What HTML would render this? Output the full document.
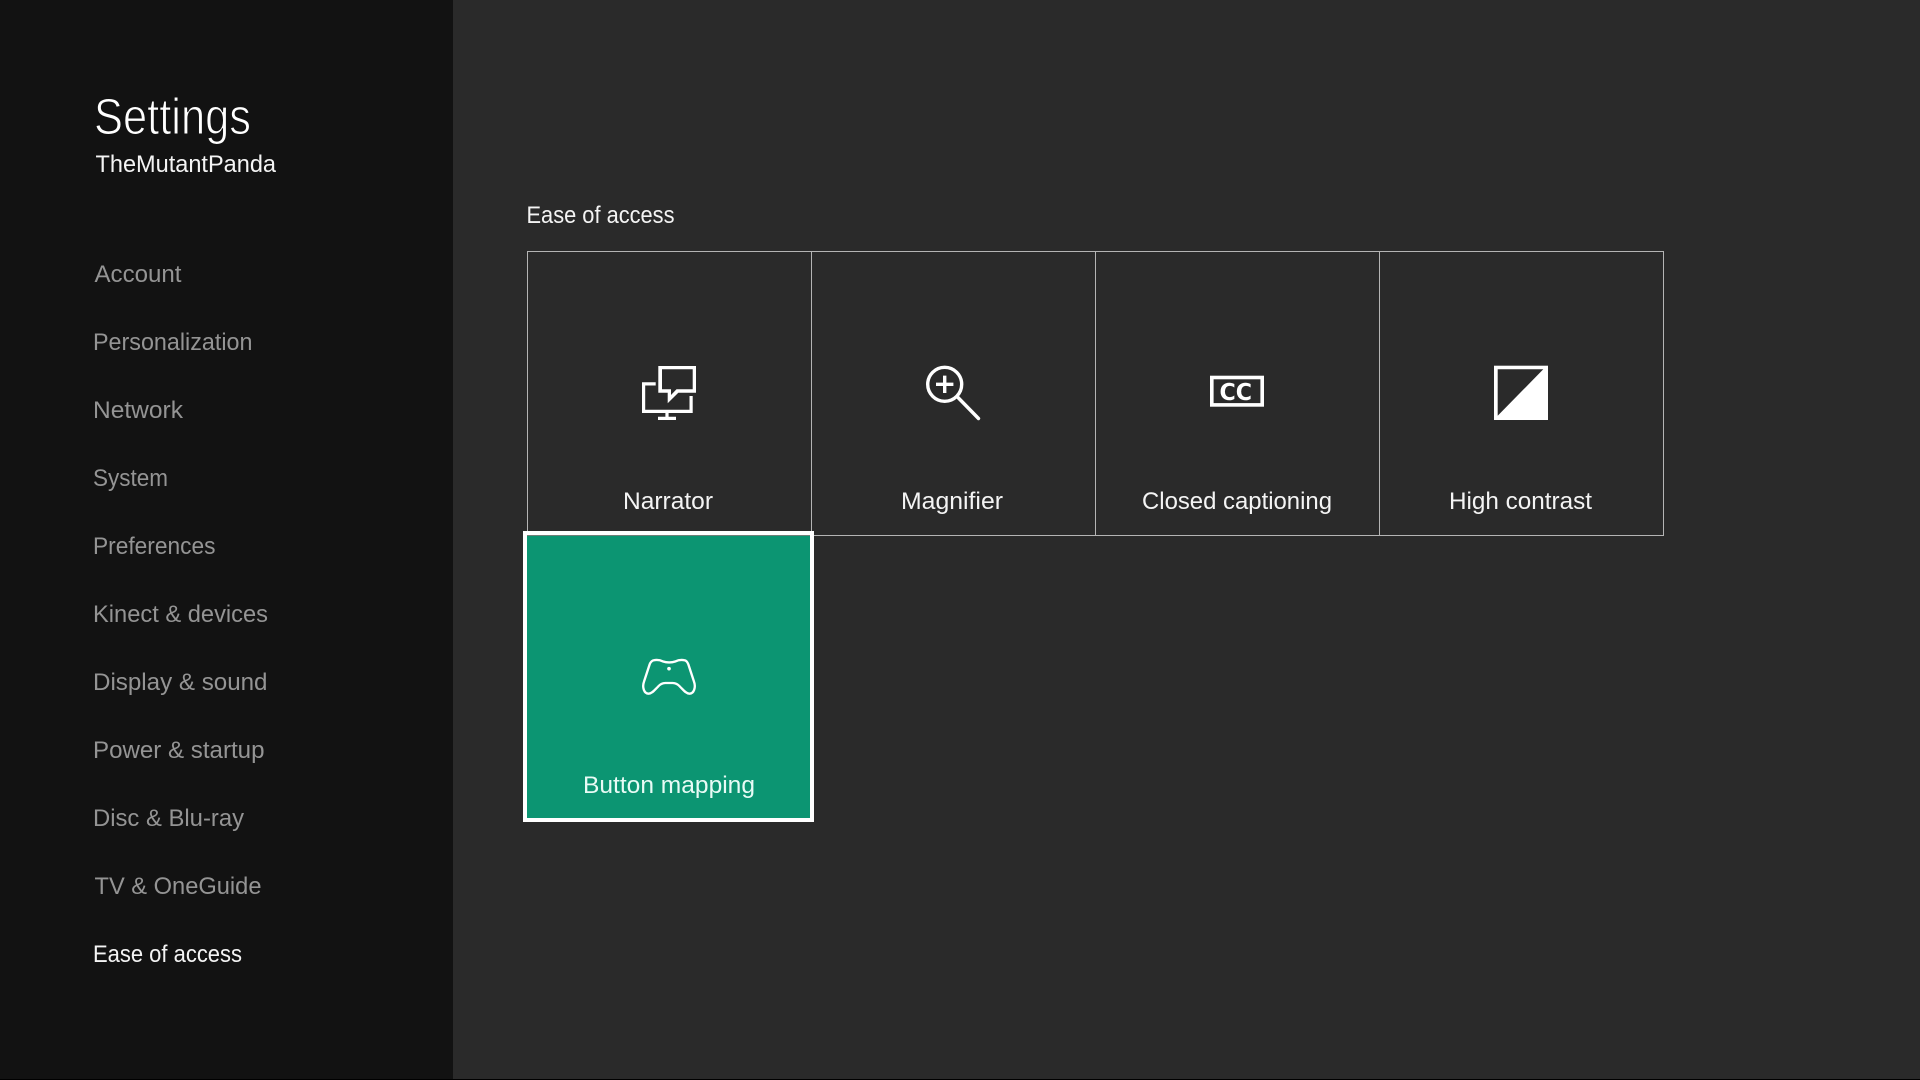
<!DOCTYPE html>
<html lang="en"><head><meta charset="utf-8"><title>Settings</title>
<style>
html,body{margin:0;padding:0;width:1920px;height:1080px;overflow:hidden;background:#2a2a2a}
svg{display:block;position:absolute;left:0;top:0}
text{font-family:"Liberation Sans",sans-serif;font-size:24px}
.n{fill:#949494}
.w{fill:#f4f4f4}
</style></head><body>
<svg width="1920" height="1080" viewBox="0 0 1920 1080" xmlns="http://www.w3.org/2000/svg">
<rect width="1920" height="1080" fill="#2a2a2a"/>
<rect width="453" height="1080" fill="#121212"/>
<rect y="1079" width="1920" height="1" fill="#000"/>

<text x="94" y="134" style="font-size:51px" fill="#fff" stroke="#121212" stroke-width="1.1" textLength="157" lengthAdjust="spacingAndGlyphs">Settings</text>
<text x="95.5" y="172" class="w" textLength="180.5" lengthAdjust="spacingAndGlyphs">TheMutantPanda</text>

<text x="94.5" y="282" class="n" textLength="87" lengthAdjust="spacingAndGlyphs">Account</text>
<text x="93" y="350" class="n" textLength="159.5" lengthAdjust="spacingAndGlyphs">Personalization</text>
<text x="93" y="418" class="n" textLength="90" lengthAdjust="spacingAndGlyphs">Network</text>
<text x="93" y="486" class="n" textLength="75" lengthAdjust="spacingAndGlyphs">System</text>
<text x="93" y="554" class="n" textLength="122.5" lengthAdjust="spacingAndGlyphs">Preferences</text>
<text x="93" y="622" class="n" textLength="175" lengthAdjust="spacingAndGlyphs">Kinect &amp; devices</text>
<text x="93" y="690" class="n" textLength="174.5" lengthAdjust="spacingAndGlyphs">Display &amp; sound</text>
<text x="93" y="758" class="n" textLength="171.5" lengthAdjust="spacingAndGlyphs">Power &amp; startup</text>
<text x="93" y="826" class="n" textLength="151" lengthAdjust="spacingAndGlyphs">Disc &amp; Blu-ray</text>
<text x="94.5" y="894" class="n" textLength="167" lengthAdjust="spacingAndGlyphs">TV &amp; OneGuide</text>
<text x="93" y="962" class="w" textLength="149" lengthAdjust="spacingAndGlyphs">Ease of access</text>

<text x="526.5" y="223" class="w" textLength="148" lengthAdjust="spacingAndGlyphs">Ease of access</text>

<g fill="none" stroke="#b4b4b4" stroke-width="1">
<rect x="527.5" y="251.5" width="284" height="284"/>
<rect x="811.5" y="251.5" width="284" height="284"/>
<rect x="1095.5" y="251.5" width="284" height="284"/>
<rect x="1379.5" y="251.5" width="284" height="284"/>
</g>

<!-- Narrator -->
<path fill="#fff" fill-rule="evenodd" d="M658.3 366H696V392.7H678.3L667.7 403.3V392.7H658.3ZM662 369.3V389.3H671V395L676.5 389.3H692.7V369.3Z"/>
<g fill="none" stroke="#fff" stroke-width="3.2">
<path d="M655.7 383.9H643.6V411.4H691.1V396"/>
<path d="M667 412V418.3M658 418.4H676"/>
</g>
<text x="623" y="509" class="w" textLength="90" lengthAdjust="spacingAndGlyphs">Narrator</text>

<!-- Magnifier -->
<g fill="none" stroke="#fff" stroke-width="3.4">
<circle cx="944.7" cy="384.3" r="17"/>
<path d="M936 384.3H953.4M944.7 375.6V393"/>
<path d="M957.5 397L978.5 418.5" stroke-linecap="round"/>
</g>
<text x="901" y="509" class="w" textLength="102" lengthAdjust="spacingAndGlyphs">Magnifier</text>

<!-- Closed captioning -->
<rect x="1211.8" y="377.5" width="50.4" height="27.4" fill="none" stroke="#fff" stroke-width="3.6"/>
<text x="1219.5" y="400" style="font-family:'DejaVu Sans',sans-serif;font-size:23px;font-weight:bold" fill="#fff" textLength="32.5" lengthAdjust="spacingAndGlyphs">CC</text>
<text x="1142" y="509" class="w" textLength="190" lengthAdjust="spacingAndGlyphs">Closed captioning</text>

<!-- High contrast -->
<rect x="1494" y="365.7" width="54" height="54.3" fill="#fff"/>
<path d="M1497.7 369.3H1543.3L1497.7 415.7Z" fill="#2a2a2a"/>
<text x="1449" y="509" class="w" textLength="143" lengthAdjust="spacingAndGlyphs">High contrast</text>

<!-- Selected tile -->
<rect x="523" y="531" width="291" height="291" fill="#fff"/>
<rect x="527" y="535" width="283" height="283" fill="#0c9572"/>
<rect x="527" y="535" width="283" height="1" fill="#6f7f78"/>
<g transform="translate(620 630) scale(.33333)">
<path d="M100 91C110 89 120 90 128 94C140 98 155 98 167 94C175 90 185 89 195 91C200 93 203 98 205 103L222 155C228 172 222 191 208 191C198 191 190 180 180 170C174 163 168 159 158 159L136 159C126 159 120 163 114 170C104 180 96 191 86 191C72 191 66 172 72 155L89 103C91 98 95 93 100 91Z" fill="none" stroke="#fff" stroke-width="7"/>
<circle cx="147" cy="116" r="5.5" fill="#fff"/>
</g>
<text x="583" y="793" fill="#e8fbf5" textLength="172" lengthAdjust="spacingAndGlyphs">Button mapping</text>
</svg>
</body></html>
